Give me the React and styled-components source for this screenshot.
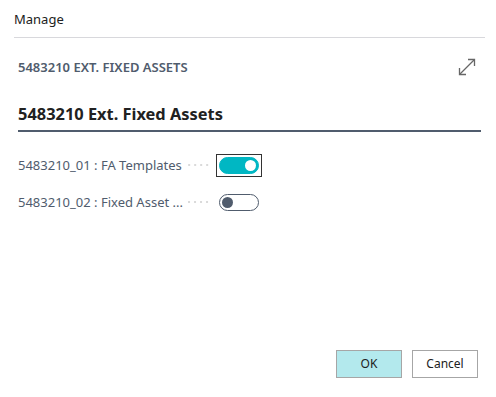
import styled, { createGlobalStyle } from "styled-components";

const Global = createGlobalStyle`
    html, body {
        margin: 0;
        padding: 0;
        background: #fff;
    }
    body {
        font-family: "Noto Sans", "Open Sans", sans-serif;
    }
`;

const Dialog = styled.div`
    width: 496px;
    height: 397px;
    display: flex;
    flex-direction: column;
    box-sizing: border-box;
    background: #fff;
`;

const Header = styled.div`
    margin: 0 11px 0 14px;
    height: 38px;
    display: flex;
    align-items: center;
    font-size: 13px;
    color: #212121;
    border-bottom: 1px solid #d8d8dc;
    box-sizing: border-box;
`;

const Body = styled.div`
    flex: 1;
    padding: 0 14px 0 18px;
    display: flex;
    flex-direction: column;
`;

const CaptionRow = styled.div`
    height: 58px;
    display: flex;
    align-items: center;
    justify-content: space-between;
`;

const Caption = styled.div`
    font-size: 13px;
    font-weight: 600;
    color: #505c6d;
`;

const ExpandButton = styled.div`
    width: 24px;
    height: 24px;
    display: flex;
    align-items: center;
    justify-content: center;
    margin-right: 3px;
`;

const Title = styled.h1`
    margin: 0 1px 0 0;
    padding: 6px 0 4px;
    font-size: 16.4px;
    font-weight: 700;
    color: #212121;
    border-bottom: 2px solid #505c6d;
    line-height: 24px;
`;

const Fields = styled.div`
    display: flex;
    flex-direction: column;
    gap: 17px;
    padding-top: 23px;
`;

const Field = styled.div`
    display: flex;
    align-items: center;
    height: 20px;
`;

const Label = styled.div`
    width: 200px;
    display: flex;
    align-items: center;
    font-size: 13px;
    color: #505c6d;
    white-space: nowrap;
`;

const LabelText = styled.span`
    overflow: hidden;
    text-overflow: ellipsis;
`;

const Leader = styled.span`
    flex: 1;
    margin: 0 8px 0 4px;
    height: 2px;
    background-image: radial-gradient(circle, #dadada 0.8px, transparent 1px);
    background-size: 6px 2px;
    background-position: right;
    min-width: 6px;
`;

const ToggleFrame = styled.div`
    padding: 2px;
    border: 1px solid ${p => (p.$focused ? "#333" : "transparent")};
    margin-left: -2px;
`;

const Toggle = styled.div`
    width: 40px;
    height: 17px;
    box-sizing: border-box;
    border-radius: 9px;
    border: 1px solid ${p => (p.$on ? "#00b7c3" : "#505c6d")};
    background: ${p => (p.$on ? "#00b7c3" : "#fff")};
    display: flex;
    align-items: center;
    justify-content: ${p => (p.$on ? "flex-end" : "flex-start")};
    padding: 0 2px;
`;

const Knob = styled.div`
    width: 11px;
    height: 11px;
    border-radius: 50%;
    background: ${p => (p.$on ? "#fff" : "#505c6d")};
`;

const Footer = styled.div`
    display: flex;
    justify-content: flex-end;
    gap: 10px;
    padding: 0 18px 19px 0;
`;

const Button = styled.button`
    all: unset;
    width: 66px;
    height: 28px;
    box-sizing: border-box;
    border: 1px solid #a6a6a6;
    background: ${p => (p.$primary ? "#b3e9ed" : "#fff")};
    color: #212121;
    font-size: 12px;
    font-family: "Noto Sans", "Open Sans", sans-serif;
    text-align: center;
    line-height: 26px;
`;

const fields = [
    { label: "5483210_01 : FA Templates", on: true, focused: true },
    { label: "5483210_02 : Fixed Asset ...", on: false },
];

const App = () => {
    return (
        <Dialog>
            <Global />
            <Header>Manage</Header>
            <Body>
                <CaptionRow>
                    <Caption>5483210 EXT. FIXED ASSETS</Caption>
                    <ExpandButton>
                        <svg width="20" height="20" viewBox="0 0 20 20" fill="none" stroke="#666" strokeWidth="1.3">
                            <path d="M2.5 17.5 L17.5 2.5" />
                            <path d="M11 2.5 H17.5 V9" />
                            <path d="M2.5 11 V17.5 H9" />
                        </svg>
                    </ExpandButton>
                </CaptionRow>
                <Title>5483210 Ext. Fixed Assets</Title>
                <Fields>
                    {fields.map(f => (
                        <Field key={f.label}>
                            <Label>
                                <LabelText>{f.label}</LabelText>
                                <Leader />
                            </Label>
                            <ToggleFrame $focused={f.focused}>
                                <Toggle $on={f.on}>
                                    <Knob $on={f.on} />
                                </Toggle>
                            </ToggleFrame>
                        </Field>
                    ))}
                </Fields>
            </Body>
            <Footer>
                <Button $primary>OK</Button>
                <Button>Cancel</Button>
            </Footer>
        </Dialog>
    );
};

export default App;
